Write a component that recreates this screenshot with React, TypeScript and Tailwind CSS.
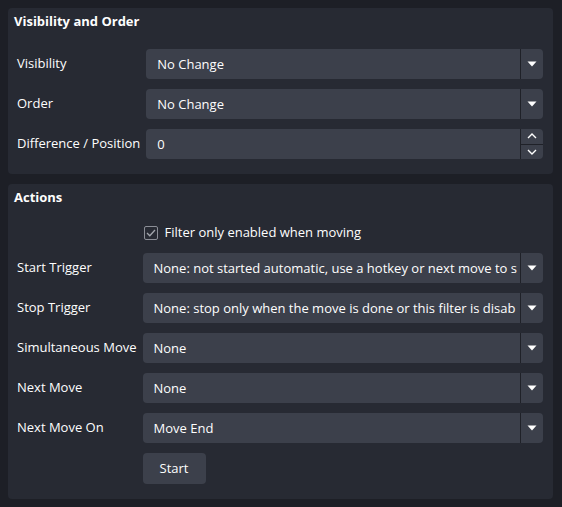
import React from 'react';

const Arrow = () => (
    <svg width="10" height="6" viewBox="0 0 10 6" className="block">
        <path d="M0.5 0.5 H9.5 L5 5.5 Z" fill="#ffffff" />
    </svg>
);

const Select = ({ value }: { value: string }) => (
    <div className="flex h-[30px] min-w-0 items-stretch rounded-[4px] bg-[#3c404b]">
        <div className="flex min-w-0 flex-1 items-center overflow-hidden whitespace-nowrap pl-[11px] pr-1 pt-px">
            {value}
        </div>
        <div className="w-px bg-[#1f2128]" />
        <div className="flex w-[22px] items-center justify-center">
            <Arrow />
        </div>
    </div>
);

const SpinBox = ({ value }: { value: string }) => (
    <div className="flex h-[30px] items-stretch rounded-[4px] bg-[#3c404b]">
        <div className="flex flex-1 items-center pl-[11px] pt-px">{value}</div>
        <div className="w-px bg-[#1f2128]" />
        <div className="flex w-[22px] flex-col">
            <div className="flex flex-1 items-center justify-center">
                <svg width="10" height="6" viewBox="0 0 10 6">
                    <path d="M1 5 L5 1 L9 5" stroke="#fff" strokeWidth="1.4" fill="none" />
                </svg>
            </div>
            <div className="h-px bg-[#1f2128]" />
            <div className="flex flex-1 items-center justify-center">
                <svg width="10" height="6" viewBox="0 0 10 6">
                    <path d="M1 1 L5 5 L9 1" stroke="#fff" strokeWidth="1.4" fill="none" />
                </svg>
            </div>
        </div>
    </div>
);

const Row = ({ label, children }: { label: string; children: React.ReactNode }) => (
    <>
        <div className="flex h-[30px] items-center whitespace-nowrap">{label}</div>
        {children}
    </>
);

export default function App() {
    return (
        <div
            className="flex h-[507px] w-[562px] flex-col gap-[10px] bg-[#1d1f26] pl-2 pr-[9px] pt-2 text-[13px] text-[#fefefe]"
            style={{ fontFamily: '"Open Sans", sans-serif' }}
        >
            {/* Visibility and Order */}
            <section className="rounded-[4px] bg-[#272a33] pb-[15px] pl-[9px] pr-[10px] pt-[5px]">
                <h2 className="-ml-[3px] h-[16px] font-bold leading-[16px]">Visibility and Order</h2>
                <div className="mt-[20px] grid grid-cols-[auto_1fr] gap-x-[6px] gap-y-[10px]">
                    <Row label="Visibility">
                        <Select value="No Change" />
                    </Row>
                    <Row label="Order">
                        <Select value="No Change" />
                    </Row>
                    <Row label="Difference / Position">
                        <SpinBox value="0" />
                    </Row>
                </div>
            </section>

            {/* Actions */}
            <section className="rounded-[4px] bg-[#272a33] pb-[15px] pl-[9px] pr-[10px] pt-[5px]">
                <h2 className="-ml-[3px] h-[16px] font-bold leading-[16px]">Actions</h2>
                <div className="mt-[18px] grid grid-cols-[auto_minmax(0,1fr)] gap-x-[6px] gap-y-[10px]">
                    <div />
                    <label className="flex h-[20px] items-center gap-[7px] pl-px">
                        <span className="flex h-[14px] w-[14px] items-center justify-center rounded-[2px] border border-[#8b8e96]">
                            <svg width="10" height="8" viewBox="0 0 10 8">
                                <path d="M1 4 L3.8 6.8 L9 1" stroke="#a3a6ad" strokeWidth="1.3" fill="none" />
                            </svg>
                        </span>
                        Filter only enabled when moving
                    </label>
                    <Row label="Start Trigger">
                        <Select value="None: not started automatic, use a hotkey or next move to s" />
                    </Row>
                    <Row label="Stop Trigger">
                        <Select value="None: stop only when the move is done or this filter is disab" />
                    </Row>
                    <Row label="Simultaneous Move">
                        <Select value="None" />
                    </Row>
                    <Row label="Next Move">
                        <Select value="None" />
                    </Row>
                    <Row label="Next Move On">
                        <Select value="Move End" />
                    </Row>
                    <div />
                    <div>
                        <button className="h-[31px] w-[63px] rounded-[4px] bg-[#3c404b] text-[13px] text-[#fefefe]">
                            Start
                        </button>
                    </div>
                </div>
            </section>
        </div>
    );
}
